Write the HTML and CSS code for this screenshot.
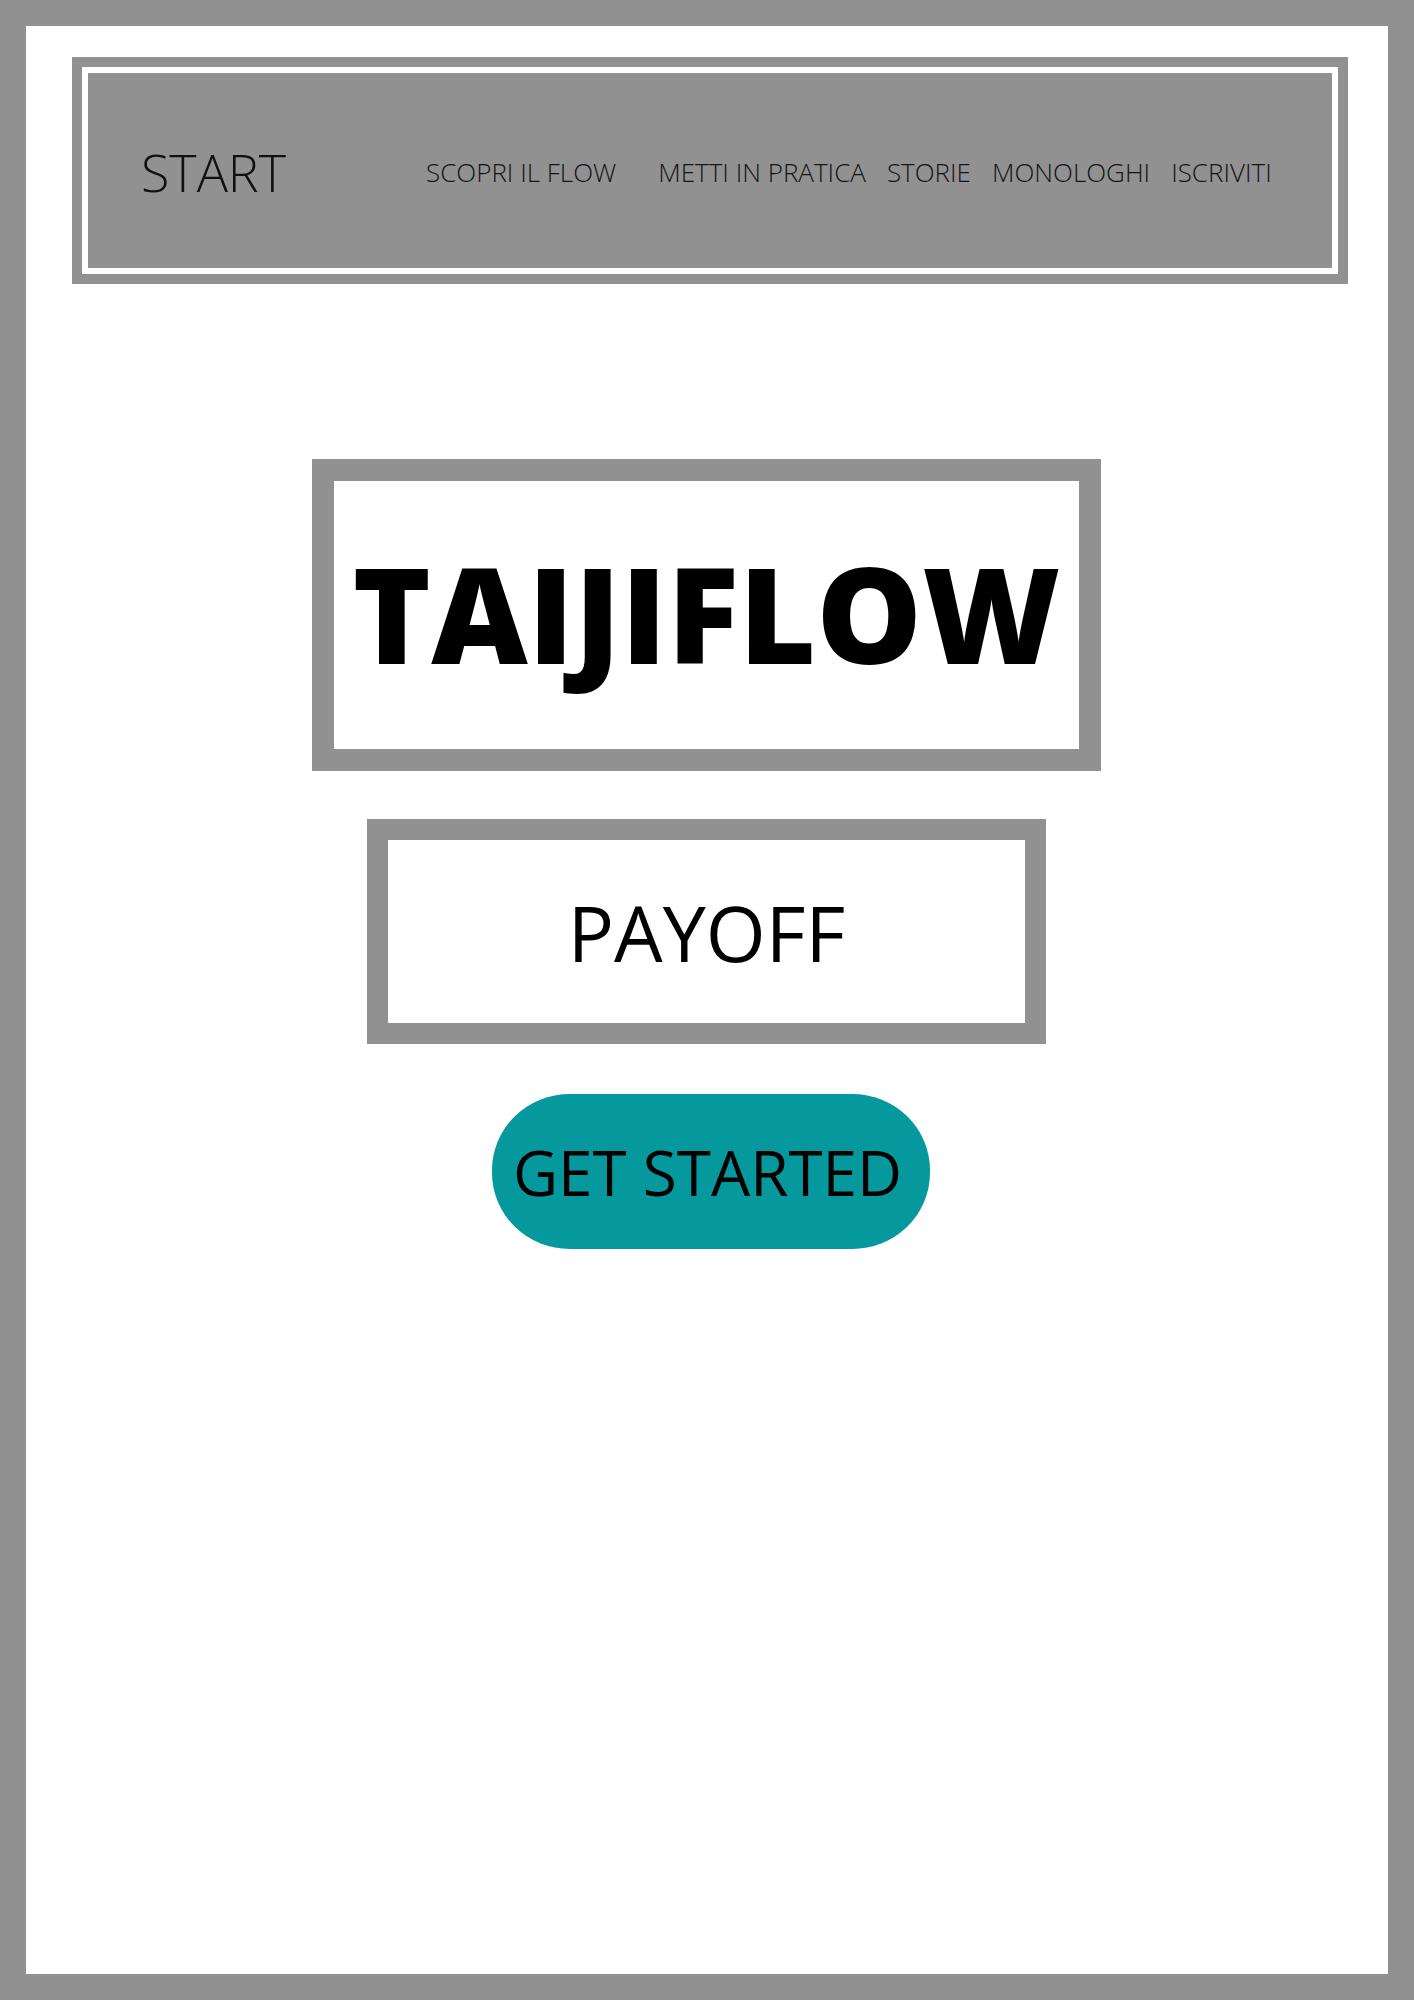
FILE: index.html
```html
<!DOCTYPE html>
<html lang="it">
<head>
<meta charset="utf-8">
<title>TAIJIFLOW</title>
<link rel="stylesheet" href="styles.css">
</head>
<body>
<div class="page">
  <header class="nav-frame">
    <div class="nav-gap">
      <nav class="nav">
        <a class="brand" href="#">START</a>
        <ul class="links">
          <li class="link link-wide"><a href="#">SCOPRI IL FLOW</a></li>
          <li class="link"><a href="#">METTI IN PRATICA</a></li>
          <li class="link"><a href="#">STORIE</a></li>
          <li class="link"><a href="#">MONOLOGHI</a></li>
          <li class="link"><a href="#">ISCRIVITI</a></li>
        </ul>
      </nav>
    </div>
  </header>
  <main class="hero">
    <div class="title-box"><h1 class="title">TAIJIFLOW</h1></div>
    <div class="payoff-box"><p class="payoff">PAYOFF</p></div>
    <a class="cta" href="#">GET STARTED</a>
  </main>
</div>
</body>
</html>
```
FILE: styles.css
```css
* { box-sizing: border-box; }
html, body { margin: 0; padding: 0; }
body {
  font-family: "Open Sans", "Liberation Sans", sans-serif;
  color: #000;
  background: #fff;
}
a { color: inherit; text-decoration: none; }

.page {
  width: 1414px;
  height: 2000px;
  border: 26px solid #919191;
  background: #fff;
  padding: 31px 40px 0 46px;
}

.nav-frame {
  border: 10px solid #919191;
  background: #fff;
  padding: 6px;
  height: 227px;
}
.nav-gap { height: 100%; }
.nav {
  height: 100%;
  background: #919191;
  display: flex;
  align-items: center;
  padding: 0 0 0 53px;
}
.brand {
  font-weight: 300;
  font-size: 52px;
  line-height: 1;
  color: #111;
  width: 285px;
  padding-top: 2px;
}
.links {
  list-style: none;
  margin: 0;
  padding: 0;
  display: flex;
  gap: 21px;
  padding-top: 2px;
}
.link {
  font-weight: 300;
  font-size: 26px;
  line-height: 1;
  color: #141414;
  white-space: nowrap;
}
.link-wide { margin-right: 21px; }

.hero {
  display: flex;
  flex-direction: column;
  align-items: center;
  padding-top: 175px;
  margin-right: 7px;
}
.title-box {
  width: 789px;
  height: 312px;
  border: 22px solid #919191;
  display: flex;
  align-items: center;
  justify-content: center;
}
.title {
  margin: 0;
  font-weight: 800;
  font-size: 133px;
  line-height: 1;
  padding-bottom: 5px;
}
.payoff-box {
  margin-top: 48px;
  width: 679px;
  height: 225px;
  border: 21px solid #919191;
  display: flex;
  align-items: center;
  justify-content: center;
}
.payoff {
  margin: 0;
  font-weight: 400;
  font-size: 77px;
  line-height: 1;
  padding-top: 2px;
}
.cta {
  margin-top: 50px;
  width: 438px;
  height: 155px;
  border-radius: 78px / 76px;
  background: #05999e;
  display: flex;
  align-items: center;
  justify-content: center;
  font-size: 62px;
  line-height: 1;
  color: #000;
  margin-left: 8px;
  padding-right: 6px;
}
```
